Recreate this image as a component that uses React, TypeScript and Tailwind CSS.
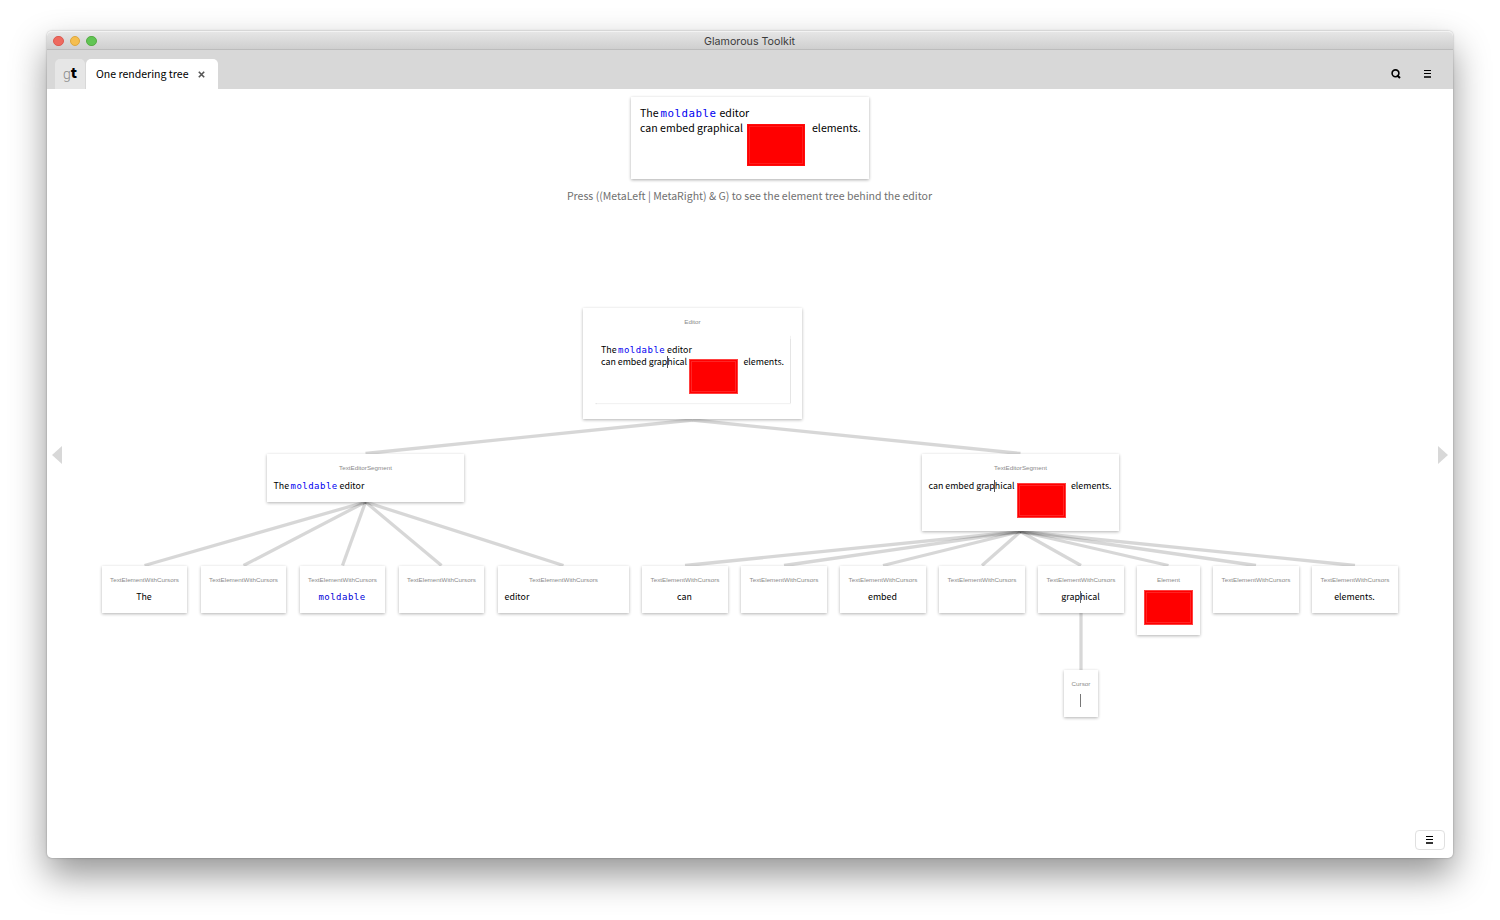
import React from 'react';

const SANS = "font-['Noto_Sans_CJK_SC','Open_Sans',sans-serif]";
const MONO = "font-['DejaVu_Sans_Mono',monospace]";

function RedBox({ big = false }: { big?: boolean }) {
  return (
    <div
      className={
        big
          ? 'h-[42px] w-[58px] shrink-0 border border-[#ff0d0d] bg-[#ff0000] p-px'
          : 'h-[35px] w-[49px] shrink-0 border border-[#ff4040] bg-[#ff0000] p-px'
      }
    >
      <div className={big ? 'h-full w-full border border-[#ff1c1c]' : 'h-full w-full border border-[#ff2424]'} />
    </div>
  );
}

function FirstLine({ big = false }: { big?: boolean }) {
  return (
    <div className={big ? 'flex h-[14.5px] items-center whitespace-pre' : 'flex h-[12px] items-center whitespace-pre'}>
      <span className={big ? 'w-[20.5px]' : 'w-[17px]'}>The</span>
      <span
        className={`${MONO} ${big ? 'w-[59px] pt-[2px] text-[10.8px] tracking-[0.5px]' : 'w-[49px] pt-px text-[9px] tracking-[0.48px]'} text-[#0000f0]`}
      >
        moldable
      </span>
      <span>editor</span>
    </div>
  );
}

function SecondLine({ big = false }: { big?: boolean }) {
  if (big) {
    return (
      <div className="flex h-[14.5px] items-start whitespace-pre leading-[14.5px]">
        <span className="w-[107px]">can embed graphical</span>
        <div className="mt-[3.5px] w-[65px]">
          <RedBox big />
        </div>
        <span>elements.</span>
      </div>
    );
  }
  return (
    <div className="flex h-[12px] items-start whitespace-pre leading-[12px]">
      <span className="relative w-[88.4px]">
        can embed graphical
        <i className="absolute top-0 left-[65.8px] h-[12px] w-px bg-[#555]" />
      </span>
      <div className="mt-[2.5px] w-[54px]">
        <RedBox />
      </div>
      <span>elements.</span>
    </div>
  );
}

type NodeProps = {
  x: number;
  y: number;
  w: number;
  h: number;
  title: string;
  children?: React.ReactNode;
};

function Node({ x, y, w, h, title, children }: NodeProps) {
  return (
    <div
      className={`${SANS} absolute flex flex-col items-center bg-white text-[8.85px] text-black shadow-[0_1px_3px_rgba(0,0,0,0.3)]`}
      style={{ left: x, top: y, width: w, height: h }}
    >
      <div className="mt-[10px] h-[8px] whitespace-nowrap font-['Liberation_Sans',sans-serif] text-[6.25px] leading-[8px] text-[#8a8a8a]">
        {title}
      </div>
      {children}
    </div>
  );
}

type LeafProps = { x: number; w?: number; text?: string; blue?: boolean; left?: boolean; cursor?: boolean };

function Leaf({ x, w = 85, text, blue, left, cursor }: LeafProps) {
  return (
    <Node x={x} y={477} w={w} h={47} title="TextElementWithCursors">
      <div className={`mt-[7px] flex h-[12px] w-full pr-[7.5px] pl-[6.5px] leading-[12px] ${left ? 'justify-start' : 'justify-center'}`}>
        <span className={`relative ${blue ? `${MONO} text-[9px] tracking-[0.48px] text-[#0000d8]` : ''}`}>
          {text}
          {cursor && <i className="absolute top-0 left-[18.5px] h-[12px] w-px bg-[#666]" />}
        </span>
      </div>
    </Node>
  );
}

const leaves: LeafProps[] = [
  { x: 55, text: 'The' },
  { x: 154 },
  { x: 253, text: 'moldable', blue: true },
  { x: 352 },
  { x: 451, w: 131, text: 'editor', left: true },
  { x: 595, w: 86, text: 'can' },
  { x: 694, w: 86 },
  { x: 793, w: 86, text: 'embed' },
  { x: 892, w: 86 },
  { x: 991, w: 86, text: 'graphical', cursor: true },
  { x: 1166, w: 86 },
  { x: 1265, w: 86, text: 'elements.' },
];

const leftTargets = [97.5, 196.5, 295.5, 394.5, 516.5];
const rightTargets = [638, 737, 836, 935, 1034, 1121.5, 1209, 1308];

function Burger() {
  return (
    <div className="flex w-[7px] flex-col gap-[2px]">
      <div className="h-px bg-black" />
      <div className="h-px bg-black" />
      <div className="h-[2px] bg-[#333]" />
    </div>
  );
}

function Tree() {
  return (
    <div className="relative h-full w-full">
      <svg className="absolute inset-0" width="1406" height="769" fill="none" stroke="#000" strokeOpacity="0.155" strokeWidth="3.3">
        <path d="M645.5 331L318.5 364.5" />
        <path d="M645.5 331L973.5 364.5" />
        {leftTargets.map((t) => (
          <path key={t} d={`M318.5 413L${t} 476.5`} />
        ))}
        {rightTargets.map((t) => (
          <path key={t} d={`M973.5 442.5L${t} 476.5`} />
        ))}
        <path d="M1034 524V581" />
      </svg>
      <Node x={536} y={219} w={219} h={111} title="Editor">
        <div className="mt-[9px] mr-px h-[68px] w-[196px] bg-white pt-[9px] pl-[7px] shadow-[0.5px_1px_1px_rgba(0,0,0,0.1)]">
          <FirstLine />
          <SecondLine />
        </div>
      </Node>
      <Node x={220} y={365} w={197} h={48} title="TextEditorSegment">
        <div className="mt-[8px] w-full pl-[6.5px]">
          <FirstLine />
        </div>
      </Node>
      <Node x={875} y={365} w={197} h={77} title="TextEditorSegment">
        <div className="mt-[8px] w-full pl-[6.5px]">
          <SecondLine />
        </div>
      </Node>
      {leaves.map((l) => (
        <Leaf key={l.x} {...l} />
      ))}
      <Node x={1090} y={477} w={63} h={69} title="Element">
        <div className="mt-[6px]">
          <RedBox />
        </div>
      </Node>
      <Node x={1017} y={581} w={34} h={47} title="Cursor">
        <div className="mt-[6px] mr-px h-[13px] w-px bg-[#777]" />
      </Node>
    </div>
  );
}

export default function App() {
  return (
    <div className="h-[920px] w-[1500px] overflow-hidden bg-white pt-[31px] pl-[47px]">
      <div className="flex h-[827px] w-[1406px] flex-col rounded-[5px] bg-white shadow-[0_0_0_1px_rgba(0,0,0,0.04),0_0_2px_1px_rgba(0,0,0,0.08),0_17px_36px_rgba(0,0,0,0.42)]">
        <header className="flex h-[19px] items-center rounded-t-[5px] border-t border-b border-t-[#f3f3f3] border-b-[#bcbcbc] bg-linear-to-b from-[#e6e6e6] to-[#cfcfcf] pl-[6px]">
          <div className="flex w-[120px] gap-[6.2px] pt-px">
            <i className="size-[10.5px] rounded-full border-[0.5px] border-[#dd5a50] bg-[#ee6a5f]" />
            <i className="size-[10.5px] rounded-full border-[0.5px] border-[#dda73c] bg-[#f5be4f]" />
            <i className="size-[10.5px] rounded-full border-[0.5px] border-[#56ac44] bg-[#61c554]" />
          </div>
          <div className="flex-1 pt-[2px] pr-[127px] text-center font-['Inter',sans-serif] text-[10.7px] leading-[17px] text-[#3c3c3c]">Glamorous Toolkit</div>
        </header>
        <nav className="flex h-[39px] items-end bg-[#d8d8d8] pl-[8px]">
          <div className="flex h-[30px] w-[30px] items-center justify-center rounded-t-[5px] bg-[#e6e6e6] leading-[28px]">
            <span className="pb-px font-['Roboto','Inter',sans-serif] text-[14px] font-light text-[#888]">g</span>
            <span className={`${SANS} pb-[5px] text-[14px] font-black text-black`}>t</span>
          </div>
          <div className={`${SANS} ml-px flex h-[30px] w-[132px] items-center rounded-t-[5px] bg-white pl-[10px] text-[10.55px] text-black`}>
            <span className="w-[102px] whitespace-nowrap">One rendering tree</span>
            <svg width="7" height="7" viewBox="0 0 7 7" stroke="#555" strokeWidth="1.6">
              <path d="M0.8 0.8L6.2 6.2M6.2 0.8L0.8 6.2" />
            </svg>
          </div>
          <div className="flex h-[30px] flex-1 items-center justify-end pr-[22px]">
            <svg className="mr-[23px]" width="10" height="10" viewBox="0 0 10 10" fill="none" stroke="#000">
              <circle cx="4.5" cy="4.3" r="3.4" strokeWidth="1.6" />
              <path d="M6 6.2L9 9" strokeWidth="2" />
            </svg>
            <Burger />
          </div>
        </nav>
        <main className="relative h-[769px] w-full">
          <Tree />
          <section className={`${SANS} absolute top-0 left-0 flex w-full flex-col items-center`}>
            <div className="mt-[8px] h-[82px] w-[238px] bg-white pt-[9px] pl-[9px] text-[10.6px] text-black shadow-[0_1px_3px_rgba(0,0,0,0.33)]">
              <FirstLine big />
              <SecondLine big />
            </div>
            <p className="mt-[9px] mr-px whitespace-nowrap text-[10.55px] leading-[16px] text-[#707070]">
              Press ((MetaLeft | MetaRight) &amp; G) to see the element tree behind the editor
            </p>
          </section>
          <i className="absolute top-[357px] left-[5px] border-y-[9.5px] border-r-[10px] border-y-transparent border-r-[#d8d8d8]" />
          <i className="absolute top-[357px] right-[5px] border-y-[9.5px] border-l-[10px] border-y-transparent border-l-[#d8d8d8]" />
          <button className="absolute right-[8px] bottom-[8px] flex h-[20px] w-[30px] items-center justify-center rounded-[4px] border border-[#e0e0e0] bg-white pr-px">
            <Burger />
          </button>
        </main>
      </div>
    </div>
  );
}
